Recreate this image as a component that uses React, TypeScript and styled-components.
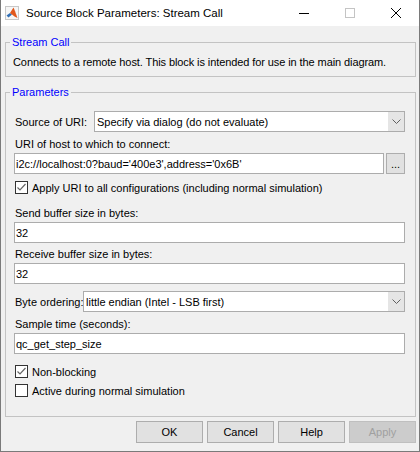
import React from 'react'
import styled, { createGlobalStyle } from 'styled-components'

const GlobalStyle = createGlobalStyle`
  html, body {
    margin: 0;
    padding: 0;
    background: #ffffff;
  }
  body {
    font-family: "Liberation Sans", Arial, sans-serif;
    font-size: 11px;
    color: #000;
  }
`

const Window = styled.div`
  width: 420px;
  height: 452px;
  box-sizing: border-box;
  border: 1px solid #7a7a7a;
  border-top: none;
  background: #f0f0f0;
  display: flex;
  flex-direction: column;
  overflow: hidden;
`

const TitleBar = styled.div`
  height: 26px;
  flex-shrink: 0;
  background: #ffffff;
  display: flex;
  align-items: center;
`

const AppIcon = styled.div`
  margin-left: 4px;
  width: 14px;
  height: 14px;
  display: flex;
`

const TitleText = styled.span`
  flex: 1;
  margin-left: 7px;
  font-size: 11.5px;
`

const CaptionButton = styled.div`
  width: 46px;
  height: 26px;
  display: flex;
  align-items: center;
  justify-content: center;
`

const Body = styled.div`
  flex: 1;
  display: flex;
  flex-direction: column;
  padding: 0 3px 0 4px;
`

const Group = styled.fieldset<{ $mt: number }>`
  margin: ${(p) => p.$mt}px 0 0 0;
  padding: 0;
  min-width: 0;
  border: 1px solid #c3c3c3;
`

const Legend = styled.legend`
  margin-left: 4px;
  padding: 0 2px;
  color: #0000ff;
  font-size: 11px;
  line-height: 14px;
`

const Description = styled.div`
  padding: 6px 7px 7px;
  line-height: 14px;
  letter-spacing: -0.09px;
`

const Params = styled.div`
  display: flex;
  flex-direction: column;
  padding: 12px 10px 16px 8px;
`

const FieldLabel = styled.div<{ $mt: number }>`
  margin-top: ${(p) => p.$mt}px;
  height: 17px;
  line-height: 17px;
  padding-left: 1px;
`

const Row = styled.div<{ $mt: number }>`
  display: flex;
  align-items: center;
  height: 21px;
  margin-top: ${(p) => p.$mt}px;
`

const RowLabel = styled.div<{ $w: number }>`
  width: ${(p) => p.$w}px;
  flex-shrink: 0;
  box-sizing: border-box;
  padding-left: 1px;
  white-space: nowrap;
`

const TextBox = styled.div`
  flex: 1;
  height: 21px;
  box-sizing: border-box;
  border: 1px solid #acacac;
  background: #ffffff;
  display: flex;
  align-items: center;
  padding-left: 1px;
  white-space: nowrap;
  overflow: hidden;
`

const Select = styled.div`
  flex: 1;
  height: 21px;
  box-sizing: border-box;
  border: 1px solid #acacac;
  background: #ffffff;
  display: flex;
`

const SelectText = styled.div`
  flex: 1;
  display: flex;
  align-items: center;
  padding-left: 2px;
  white-space: nowrap;
`

const SelectArrow = styled.div`
  width: 16px;
  background: #e5e5e5;
  display: flex;
  align-items: center;
  justify-content: center;
`

const BrowseButton = styled.div`
  width: 19px;
  height: 21px;
  margin-left: 2px;
  box-sizing: border-box;
  border: 1px solid #adadad;
  background: #e1e1e1;
  display: flex;
  align-items: flex-end;
  justify-content: center;
  padding-bottom: 3px;
  font-size: 11px;
  line-height: 11px;
`

const CheckRow = styled.div<{ $mt: number }>`
  display: flex;
  align-items: center;
  height: 19px;
  margin-top: ${(p) => p.$mt}px;
  padding-left: 1px;
`

const Box = styled.span`
  width: 13px;
  height: 13px;
  box-sizing: border-box;
  border: 1px solid #333333;
  background: #ffffff;
  margin-right: 4px;
  display: flex;
  align-items: center;
  justify-content: center;
`

const ButtonBar = styled.div`
  display: flex;
  justify-content: flex-end;
  gap: 4px;
  margin-top: 4px;
`

const DialogButton = styled.button<{ $disabled?: boolean }>`
  width: 67px;
  height: 22px;
  padding: 0;
  box-sizing: border-box;
  border: 1px solid ${(p) => (p.$disabled ? '#bfbfbf' : '#adadad')};
  background: ${(p) => (p.$disabled ? '#cccccc' : '#e1e1e1')};
  color: ${(p) => (p.$disabled ? '#a0a0a0' : '#000000')};
  font-family: "Liberation Sans", Arial, sans-serif;
  font-size: 11px;
`

const Chevron = () => (
  <svg width="9" height="5" viewBox="0 0 9 5">
    <polyline points="0.5,0.5 4.5,4.5 8.5,0.5" fill="none" stroke="#606060" strokeWidth="1" />
  </svg>
)

const Check: React.FC<{ checked?: boolean }> = ({ checked }) => (
  <Box>
    {checked && (
      <svg width="11" height="11" viewBox="0 0 11 11">
        <polyline points="1.5,5.5 4,8 9.5,2" fill="none" stroke="#666666" strokeWidth="1.2" />
      </svg>
    )}
  </Box>
)

const MatlabIcon = () => (
  <svg width="14" height="14" viewBox="0 0 14 14">
    <rect x="0.5" y="0.5" width="13" height="13" fill="#f6f6f6" stroke="#c8c8c8" />
    <polygon points="1.5,9.5 5,7 7,8.5 3.5,11.5" fill="#2f6eb5" />
    <polygon points="5,7 8.5,1.5 12.5,12 9.5,10.5 7,8.5" fill="#e2581c" />
    <polygon points="8.5,1.5 10,5 12.5,12" fill="#b7331a" />
  </svg>
)

const App: React.FC = () => {
  return (
    <>
      <GlobalStyle />
      <Window>
        <TitleBar>
          <AppIcon>
            <MatlabIcon />
          </AppIcon>
          <TitleText>Source Block Parameters: Stream Call</TitleText>
          <CaptionButton>
            <svg width="10" height="10" viewBox="0 0 10 10">
              <line x1="0" y1="5.5" x2="10" y2="5.5" stroke="#000" strokeWidth="1" />
            </svg>
          </CaptionButton>
          <CaptionButton>
            <svg width="10" height="10" viewBox="0 0 10 10">
              <rect x="0.5" y="0.5" width="9" height="9" fill="none" stroke="#c4c4c4" strokeWidth="1" />
            </svg>
          </CaptionButton>
          <CaptionButton>
            <svg width="10" height="10" viewBox="0 0 10 10">
              <path d="M0 0 L10 10 M10 0 L0 10" stroke="#000" strokeWidth="1" />
            </svg>
          </CaptionButton>
        </TitleBar>

        <Body>
          <Group $mt={9}>
            <Legend>Stream Call</Legend>
            <Description>
              Connects to a remote host. This block is intended for use in the main diagram.
            </Description>
          </Group>

          <Group $mt={8}>
            <Legend>Parameters</Legend>
            <Params>
              <Row $mt={0}>
                <RowLabel $w={80}>Source of URI:</RowLabel>
                <Select>
                  <SelectText>Specify via dialog (do not evaluate)</SelectText>
                  <SelectArrow>
                    <Chevron />
                  </SelectArrow>
                </Select>
              </Row>

              <FieldLabel $mt={4}>URI of host to which to connect:</FieldLabel>
              <Row $mt={0}>
                <TextBox>i2c://localhost:0?baud='400e3',address='0x6B'</TextBox>
                <BrowseButton>...</BrowseButton>
              </Row>

              <CheckRow $mt={4}>
                <Check checked />
                Apply URI to all configurations (including normal simulation)
              </CheckRow>

              <FieldLabel $mt={8}>Send buffer size in bytes:</FieldLabel>
              <Row $mt={0}>
                <TextBox>32</TextBox>
              </Row>

              <FieldLabel $mt={3}>Receive buffer size in bytes:</FieldLabel>
              <Row $mt={0}>
                <TextBox>32</TextBox>
              </Row>

              <Row $mt={7}>
                <RowLabel $w={69}>Byte ordering:</RowLabel>
                <Select>
                  <SelectText>little endian (Intel - LSB first)</SelectText>
                  <SelectArrow>
                    <Chevron />
                  </SelectArrow>
                </Select>
              </Row>

              <FieldLabel $mt={4}>Sample time (seconds):</FieldLabel>
              <Row $mt={0}>
                <TextBox>qc_get_step_size</TextBox>
              </Row>

              <CheckRow $mt={8}>
                <Check checked />
                Non-blocking
              </CheckRow>
              <CheckRow $mt={0}>
                <Check />
                Active during normal simulation
              </CheckRow>
            </Params>
          </Group>

          <ButtonBar>
            <DialogButton>OK</DialogButton>
            <DialogButton>Cancel</DialogButton>
            <DialogButton>Help</DialogButton>
            <DialogButton $disabled>Apply</DialogButton>
          </ButtonBar>
        </Body>
      </Window>
    </>
  )
}

export default App
